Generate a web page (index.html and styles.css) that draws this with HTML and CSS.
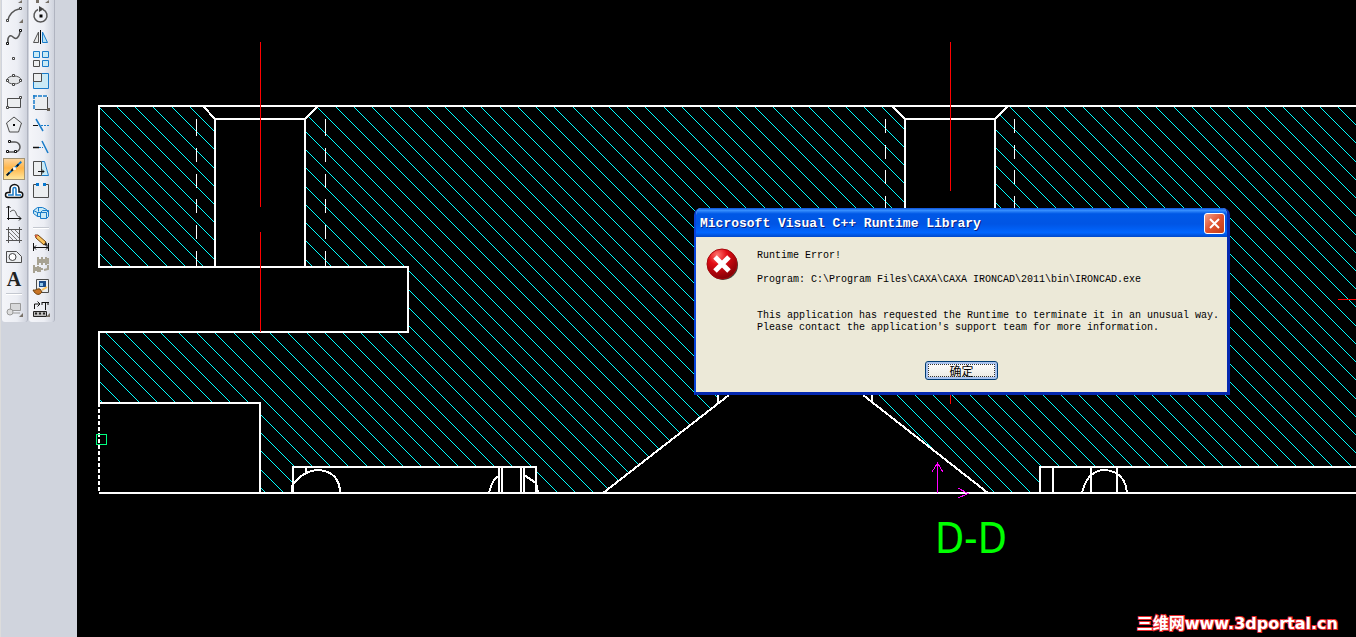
FILE: index.html
```
<!DOCTYPE html>
<html lang="zh-CN">
<head>
  <meta charset="UTF-8">
  <meta name="viewport" content="width=device-width, initial-scale=1">
  <title>D-D</title>
  <link rel="stylesheet" href="styles.css">
</head>
<body>
  <aside class="sidebar">
    <div class="toolbar">
      <div class="cut"><svg width="22" height="4"><path d="M19 0v3h-4z" fill="#777067"/></svg></div>
      <button aria-label="Arc"><svg viewBox="0 0 22 22"><path d="M5 16C6 11 10 6 16 5" class="k w"/><path class="n" d="M3.500 15.500h2v2h-2zM16.500 3.500h2v2h-2z"/><path d="M20 15v4h-4z" fill="#777067"/></svg></button>
      <button aria-label="Spline"><svg viewBox="0 0 22 22"><path d="M5 17C4 11 7 8 10 11S16 12 17 6" class="k w"/><path class="n b" d="M3.500 16.500h2v2h-2zM16.500 3.500h2v2h-2z"/></svg></button>
      <button aria-label="Point"><svg viewBox="0 0 22 22"><path class="n" d="M9.500 9.500h2v2h-2z"/></svg></button>
      <button aria-label="Ellipse"><svg viewBox="0 0 22 22"><ellipse cx="11" cy="10" rx="7" ry="4" fill="#e4e6e9" stroke="#555"/><path class="n" d="M3.500 9.500h2v2h-2zM16.500 9.500h2v2h-2zM9.500 4.500h2v2h-2zM9.500 13.500h2v2h-2z"/></svg></button>
      <button aria-label="Rectangle"><svg viewBox="0 0 22 22"><path class="o" d="M4.500 6.500h13v9h-13z"/><path class="n" d="M3.500 14.500h2v2h-2zM16.500 4.500h2v2h-2z"/></svg></button>
      <button aria-label="Polygon"><svg viewBox="0 0 22 22"><path class="o" d="M11 3l7.500 6-3 9h-9l-3-9z"/><path d="M10 10h2v2h-2z"/></svg></button>
      <button aria-label="Polyline"><svg viewBox="0 0 22 22"><path d="M8 6h4a5 5 0 0 1 0 10H5" class="k w"/><path class="n b" d="M5.500 4.500h2v2h-2zM3.500 14.500h2v2h-2zM11.500 14.500h2v2h-2z"/></svg></button>
      <button class="active" aria-label="Centre line"><svg viewBox="0 0 22 22"><path d="M3 18L19 3" stroke="#0878d0" stroke-width="2"/><path d="M3 18l3-3M8 13l2-2M14 8l2-2" stroke="#111" stroke-width="2"/><path d="M10 9h3v3h-3z" fill="#fff"/></svg></button>
      <button aria-label="Offset"><svg viewBox="0 0 22 22"><path d="M5 17.500a2.500 2.500 0 0 1 0-5h2V9a4.500 4.500 0 0 1 9 0v3h1a2.500 2.500 0 0 1 0 5.500z" fill="#fff" stroke="#111" stroke-width="1.500"/><path d="M5 15h5V9a1.500 1.500 0 0 1 3 0v6h5" fill="none" stroke="#187bc9" stroke-width="1.500"/></svg></button>
      <button aria-label="Function curve"><svg viewBox="0 0 22 22"><path class="k b" d="M5.500 18V4M3.500 6l2-2 2 2M4 16.500h14M16 14.500l2 2-2 2"/><path class="k" d="M7 10c3-3 5-2 6 1s2 4 4 4"/></svg></button>
      <button aria-label="Hatch"><svg viewBox="0 0 22 22"><path class="k" d="M3 5.500h16M3 16.500h16M5.500 3v16M16.500 3v16"/><path d="M6 8l8 8M6 12l4 4M8 6l8 8M12 6l4 4" stroke="#777"/></svg></button>
      <button aria-label="Local view"><svg viewBox="0 0 22 22"><path class="o" d="M3.500 5.500h10l5 5v6h-15z"/><circle cx="9.500" cy="11" r="3.500" fill="#fff" stroke="#444"/></svg></button>
      <button class="letter" aria-label="Text">A</button>
      <hr>
      <button aria-label="Callout"><svg viewBox="0 0 22 22"><path d="M7.500 5.500h10v7h-10z" fill="#d7d8da" stroke="#999"/><circle cx="7" cy="14" r="3" fill="#ddd" stroke="#999"/><path d="M10 15h7" stroke="#999"/><path d="M20 15v4h-4z" fill="#777067"/></svg></button>
    </div>
    <div class="toolbar">
      <div class="cut"><svg width="22" height="4"><path d="M6 0h3v3h-3zM19 0v3h-4z" fill="#777067"/></svg></div>
      <button aria-label="Rotate"><svg viewBox="0 0 22 22"><path class="k w" d="M8 5.500a6.500 6.500 0 1 0 5 0"/><path d="M9 2l5 3-5 3z" fill="#444"/><path d="M9.500 10.500h3v3h-3z"/></svg></button>
      <button aria-label="Mirror"><svg viewBox="0 0 22 22"><path d="M8.500 6v10.500h-5z" fill="#e8e8e8" stroke="#555"/><path d="M10.500 4v14" stroke="#000"/><path d="M12.500 6v10.500h5z" fill="#b8e2f4" stroke="#187bc9"/></svg></button>
      <button aria-label="Array"><svg viewBox="0 0 22 22"><path class="u" d="M3.500 3.500h6v6h-6zM12.500 3.500h6v6h-6zM12.500 12.500h6v6h-6z"/><path class="o" d="M3.500 12.500h6v6h-6z"/></svg></button>
      <button aria-label="Scale"><svg viewBox="0 0 22 22"><path class="u" d="M3.500 3.500h15v15h-15z"/><path class="o" d="M3.500 3.500h8v8h-8z"/></svg></button>
      <button aria-label="Stretch"><svg viewBox="0 0 22 22"><path class="o" d="M4.500 4.500h13v13h-13z"/><path d="M4 4h14M4 4v14" stroke="#eef0f4" stroke-width="2"/><path d="M3 4h14M4 3v15" stroke="#187bc9" stroke-width="1.500" stroke-dasharray="4 1"/><path d="M17 16h3v3h-3z" fill="#665f55"/></svg></button>
      <button aria-label="Trim"><svg viewBox="0 0 22 22"><path d="M3 11.500h5" stroke="#111"/><path d="M11 11.500h8" stroke="#187bc9" stroke-dasharray="2 1"/><path d="M6 5l7 12" stroke="#187bc9" stroke-width="1.500"/></svg></button>
      <button aria-label="Extend"><svg viewBox="0 0 22 22"><path d="M3 11.500h6" stroke="#111" stroke-width="1.500"/><path d="M9 11.500h4" stroke="#187bc9" stroke-dasharray="2 1"/><path d="M12 5l6 12" stroke="#187bc9" stroke-width="1.500"/></svg></button>
      <button aria-label="Move edge"><svg viewBox="0 0 22 22"><path class="u" d="M11.500 3.500h3l4 14h-7z"/><path class="o" d="M3.500 3.500h8v14h-8z"/><path class="k b" d="M8 13.500h6M12 11.500l2 2-2 2"/></svg></button>
      <button aria-label="Break"><svg viewBox="0 0 22 22"><path class="o" d="M3.500 4.500h15v13h-15z"/><path d="M8 3h6v3h-6z" fill="#eef0f4"/><path d="M6 3h3v3h-3zM13 3h3v3h-3z" fill="#0878d0"/></svg></button>
      <button aria-label="Blocks"><svg viewBox="0 0 22 22"><path class="u" d="M3.500 8.500l4-3h5l4 2v4l-4 3h-5l-4-3zM3.500 8.500l4 2h4M7.500 10.500v4M8.500 5.500v4"/><path class="u" d="M10.500 10.500l2-2h6v6l-2 2h-6zM10.500 10.500h6v6M16.500 10.500l2-2"/></svg></button>
      <hr>
      <button aria-label="Dimension"><svg viewBox="0 0 22 22"><path class="k b" d="M3.500 11v8M18.500 11v8M4 15.500h14M6 13.500l-2 2 2 2M16 13.500l2 2-2 2"/><path d="M5 3l3 0 8 7-2 3-8-7z" fill="#f9c35c" stroke="#70420c"/><path d="M5 3h3l-2 3z" fill="#db5e46"/><path d="M14 13l2-3 2 4z" fill="#222"/></svg></button>
      <button aria-label="Edit dimension"><svg viewBox="0 0 22 22"><path d="M8 3v8M10 5v4M12 3v8M14 5v4M16 3v8M18 4v6M4 11v8M6 13v4M8 12v6M10 13v5M7 7h12M3 15h10" stroke="#a7a292" stroke-width="2"/><path d="M14 16l4-1v-4" fill="none" stroke="#a7a292" stroke-width="2"/></svg></button>
      <button aria-label="Style brush"><svg viewBox="0 0 22 22"><path class="o" d="M6.500 3.500h12v13h-12z"/><path d="M9 5h7v6h-7z" fill="#1a4b88"/><path d="M10 7h3v3h-3z" fill="#8fc6ec"/><path d="M3 14c3 1 4-2 7-1l2 3c-2 3-6 4-9-2z" fill="#c87426" stroke="#70420c"/><path d="M12 14l5-3" stroke="#f9c35c" stroke-width="2"/></svg></button>
      <button aria-label="Tool options"><svg viewBox="0 0 22 22"><path class="k b" d="M4.500 11V6h5M7.500 3.500l2.500 2.500-2.500 2.500M12 4.500h7M12 4v3M18 4v3M15.500 5v7" /><path d="M3.500 13.500h13v5h-13z" fill="#bbb" stroke="#222"/><path d="M5 15.500h2M9 15.500h2M13 15.500h2" stroke="#222" stroke-width="2"/><path d="M20 15v4h-4z" fill="#777067"/></svg></button>
    </div>
  </aside>

  <main class="canvas">
    <svg class="drawing" viewBox="77 0 1279 637" preserveAspectRatio="xMinYMin slice" aria-label="Section D-D">
      <clipPath id="section">
        <path d="M99 106H204L215 119V267H99z"/>
        <path d="M317 106H893L905 119V300H718V403L603 493H536V467H293V493H260V403H99V332H408V267H305V119z"/>
        <path d="M1007 106H1356V467H1040V493H988L872 403V300H995V119z"/>
      </clipPath>
      <g clip-path="url(#section)"><path id="hatch" class="hatch"/></g>

      <!-- outline -->
      <g class="outline">
        <path d="M1356 106H99V267H408V332H99V403H260V493M99 493H1356"/>
        <path d="M204 107L215 119V267M215 119H305M317 107L305 119V267"/>
        <path d="M893 107L905 119V267M905 119H995M1007 107L995 119V267"/>
        <path d="M293 493V467H536V493M306 467V474M499 467V493M502 467V493M521 467V493M524 467V493"/>
        <path d="M292 493V486C299 476 309 470 319 470C333 471 340 480 340 493M489 493C491 484 494 478 499 476M524 475L536 483L538 493"/>
        <path d="M603 493L729 395M718 395V403M863 395L988 493M872 395V403"/>
        <path d="M1356 467H1040V493M1053 467V493M1091 467V493M1117 467V493M1082 493C1086 476 1094 470 1105 470C1119 471 1126 480 1127 493"/>
      </g>
      <path class="edge" d="M99 403V493"/>
      <path class="thin" d="M196.500 119v17m0 12v14m0 12v14m0 11v14m0 12v14m0 12v16M325.500 119v17m0 12v14m0 12v14m0 11v14m0 12v14m0 12v16"/>
      <path class="thin" d="M885.500 119v14m0 12v14m0 11v14m0 12v14M1014.500 119v14m0 12v14m0 11v14m0 12v14"/>
      <path class="axis" d="M260.500 42V207M260.500 232V332M950.500 42V191M950.500 395V404M1338 299.500H1356"/>
      <path class="origin" d="M937.500 493V463M932 472L937.500 463L943 472M958 488L968 493.500L958 498"/>
      <path class="grip" d="M96.500 434.500h10v10h-10z"/>
      <text class="label" x="935" y="553">D-D</text>
    </svg>

    <section class="dialog" role="alertdialog" aria-labelledby="dialog-title">
      <header class="titlebar">
        <h1 id="dialog-title">Microsoft Visual C++ Runtime Library</h1>
        <button class="close" aria-label="Close"><svg viewBox="0 0 19 19"><path d="M5 5l9 9M14 5l-9 9" stroke="#fff" stroke-width="2"/></svg></button>
      </header>
      <div class="message">
        <svg class="error" width="34" height="34" viewBox="0 0 34 34">
          <defs><radialGradient id="ball" cx="35%" cy="20%" r="80%"><stop offset="0" stop-color="#ff7770"/><stop offset=".4" stop-color="#e20c14"/><stop offset="1" stop-color="#860006"/></radialGradient></defs>
          <circle cx="17" cy="17" r="15" fill="#454039"/>
          <circle cx="16" cy="16" r="15" fill="url(#ball)" stroke="#a6080c"/>
          <path d="M9 9l14 14M23 9l-14 14" stroke="#fff" stroke-width="5"/>
        </svg>
        <p>Runtime Error!

Program: C:\Program Files\CAXA\CAXA IRONCAD\2011\bin\IRONCAD.exe


This application has requested the Runtime to terminate it in an unusual way.
Please contact the application's support team for more information.</p>
      </div>
      <button class="ok">确定</button>
    </section>

    <a class="site" href="#">三维网www.3dportal.cn</a>
  </main>

  <script>
    // 45 degree hatch over the whole plate, cut to the section by the clip path
    const step = 18.22;
    let d = '';
    for (let k = -29; k < 70; k++) {
      // whole pixels keep every line equally thin
      const x = Math.round(116 + k * step);
      d += `M${x} 106l390 390`;
    }
    document.getElementById('hatch').setAttribute('d', d);
  </script>
</body>
</html>
```
FILE: styles.css
```
* { box-sizing: border-box; }
body { margin: 0; display: flex; min-height: 100vh; background: #000; font-family: "Liberation Sans", "Noto Sans CJK SC", sans-serif; }
button { padding: 0; border: 0; background: none; font: inherit; }

.sidebar { flex: none; width: 77px; padding-left: 1px; display: flex; align-items: flex-start; gap: 1px; background: #d0d4dd; border-left: 1px solid #dcdcdc; }
.toolbar { width: 26px; padding: 0 2px 2px 1px; background: linear-gradient(90deg, #f4f5f9, #eceef4 60%, #cfd3dd); border-right: 1px solid #b0b4c0; border-radius: 0 0 3px 3px; }
.toolbar button { display: block; width: 22px; height: 22px; }
.toolbar button svg { display: block; }
.toolbar .cut { height: 4px; overflow: hidden; }
.toolbar .cut svg { display: block; }
.toolbar hr { height: 2px; margin: 3px; border: 0; background: #fff; border-top: 1px solid #c4c8d0; }
.toolbar .active { border: 1px solid #a39474; background: linear-gradient(#fbd49d, #ffb549 45%, #ffe69c); }
.toolbar .letter { font: bold 20px/22px "Liberation Serif", serif; color: #222; }
.k { fill: none; stroke: #555; }
.w { stroke-width: 1.5; }
.n { fill: #fff; stroke: #444; }
.b { stroke: #111; }
.o { fill: #eceef0; stroke: #4c4c4c; }
.u { fill: #c9eaf6; stroke: #187bc9; }

.canvas { position: relative; flex: 1; min-width: 0; overflow: hidden; }
.drawing { display: block; width: 100%; shape-rendering: crispEdges; }
.drawing path { fill: none; }
.drawing clipPath path { fill: #000; }
.drawing .hatch { stroke: #0ff; stroke-width: 1; }
.outline { stroke: #fff; stroke-width: 2; }
.edge { stroke: #fff; stroke-width: 2; stroke-dasharray: 4 2; }
.thin { stroke: #fff; }
.axis { stroke: #f00; }
.origin { stroke: #f0f; }
.grip { stroke: #00ff80; }
.label { font: 42px "DejaVu Sans Condensed", "DejaVu Sans", sans-serif; font-stretch: condensed; fill: #0f0; }

.dialog { position: absolute; left: 617px; top: 208px; width: 536px; border: solid #0842d8; border-width: 0 3px 3px 2px; border-bottom-color: #0428b0; border-right-color: #0428b0; border-radius: 7px 7px 0 0; background: #ece9d8; overflow: hidden; }
.titlebar { height: 29px; padding: 2px 2px 0 4px; display: flex; align-items: center; justify-content: space-between; background: linear-gradient(#0a50d8, #3890ff 8%, #0058e6 20%, #0055e5 55%, #0066ff 85%, #0048ca); }
.titlebar h1 { margin: 0; font: bold 13px/20px "Liberation Mono", monospace; color: #fff; text-shadow: 1px 1px #0a1f80; }
.close { width: 21px; height: 21px; border: 1px solid #fff; border-radius: 3px; background: linear-gradient(135deg, #f0a08a, #e0512e 50%, #c23c14); }
.close svg { display: block; }
.message { display: flex; align-items: flex-start; gap: 17px; padding: 11px 8px 0 10px; }
.message p { margin: 2px 0 0; white-space: pre; font: 10px/12px "Liberation Mono", monospace; color: #000; }
.error { flex: none; }
.ok { display: block; width: 73px; height: 19px; margin: 27px auto 12px; border: 1px solid #003c74; border-radius: 3px; background: linear-gradient(#fff, #ecebe5 85%, #d6d0c5); box-shadow: inset 0 0 0 2px #a9c3ef; font: 12px/13px "Noto Sans CJK SC", sans-serif; outline: 1px dotted #333; outline-offset: -4px; }

.site { position: absolute; right: 18px; bottom: 4px; font: bold 16px/18px "DejaVu Sans", "Noto Sans CJK SC", sans-serif; color: #fff; text-decoration: none; -webkit-text-stroke: 2px #e8262a; paint-order: stroke fill; }
```
